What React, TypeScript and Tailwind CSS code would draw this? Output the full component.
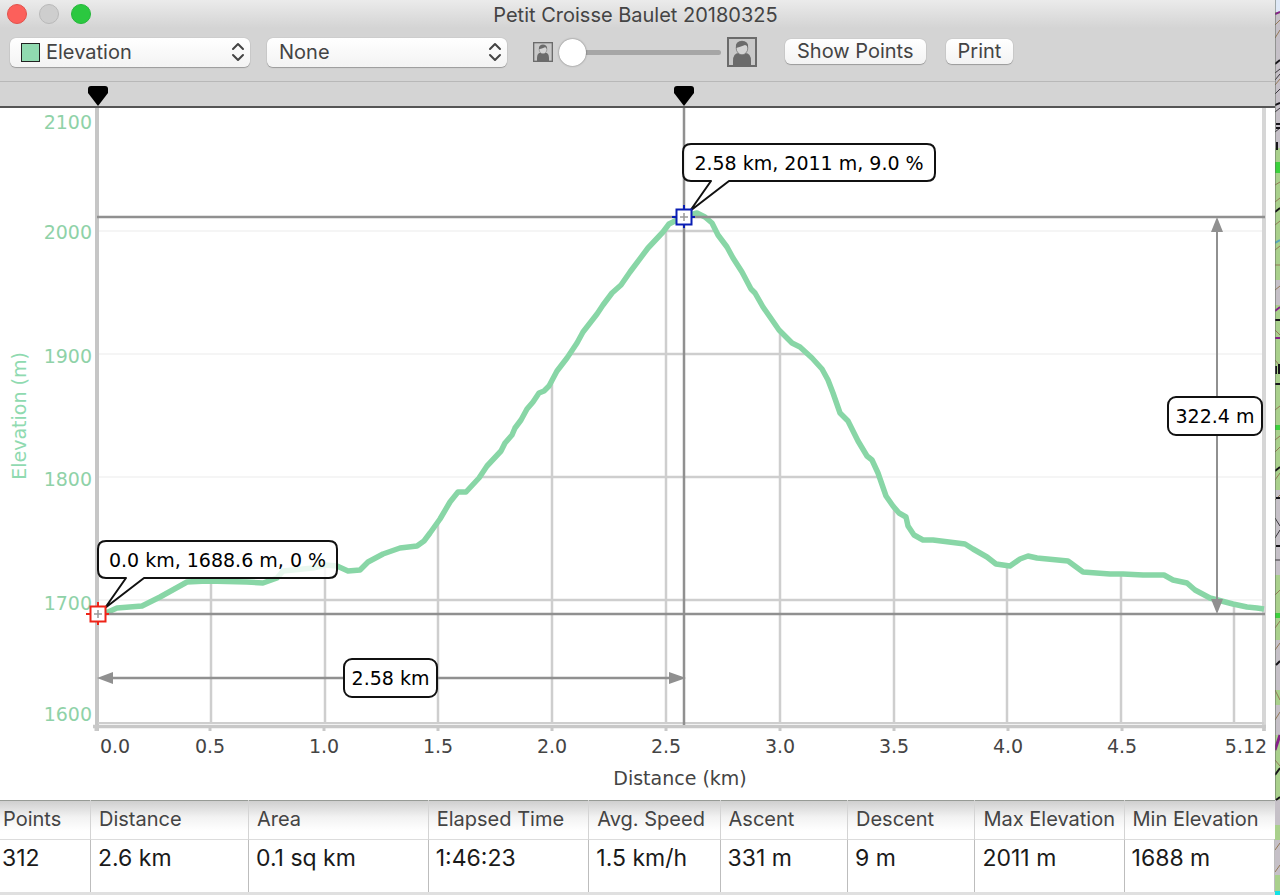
import type { ReactNode } from "react";

const profile =
  "M97 614L108 612L117 608L142 606L160 597L178 587L187 582L207 581L247 582L263 583L277 578L283 571L313 568L325 565L337 566L348 571L360 570L368 562L383 554L400 548L417 546L424 541L430 533L440 519L450 502L458 492L466 492L479 478L487 466L501 451L505 443L512 435L515 428L521 420L527 409L533 402L539 393L544 391L549 386L557 371L567 358L577 343L583 332L597 314L603 305L612 293L621 285L630 272L648 248L663 232L669 224L683 217L697 213L705 217L712 223L718 235L727 247L733 258L742 272L751 289L755 293L763 307L770 317L779 330L792 343L800 347L812 358L822 369L828 380L833 393L840 413L848 421L858 441L867 456L872 460L878 473L886 496L893 506L899 513L906 517L908 526L914 535L923 540L933 540L965 544L973 549L987 557L996 564L1010 566L1020 559L1028 556L1037 558L1068 561L1083 572L1110 574L1123 574L1143 575L1164 575L1173 580L1187 583L1195 590L1210 598L1233 604L1247 607L1257 608L1264 609";

const verticals = [211, 325, 438, 552, 666, 780, 894, 1007, 1121, 1234];
const horizontals = [231, 354, 477, 600];
const ticks = [96, 210, 324, 438, 552, 666, 780, 894, 1008, 1122, 1264];
const xLabels: [string, number][] = [
  ["0.0", 115], ["0.5", 210], ["1.0", 324], ["1.5", 438], ["2.0", 552], ["2.5", 666],
  ["3.0", 780], ["3.5", 894], ["4.0", 1008], ["4.5", 1122], ["5.12", 1246],
];
const yLabels: [string, number][] = [
  ["2100", 129], ["2000", 239], ["1900", 363], ["1800", 486], ["1700", 610], ["1600", 721],
];

const stats = [
  { name: "Points", value: "312", col: "w-[7.1%]" },
  { name: "Distance", value: "2.6 km", col: "w-[12.4%]" },
  { name: "Area", value: "0.1 sq km", col: "w-[14.1%]" },
  { name: "Elapsed Time", value: "1:46:23", col: "w-[12.6%]" },
  { name: "Avg. Speed", value: "1.5 km/h", col: "w-[10.3%]" },
  { name: "Ascent", value: "331 m", col: "w-[10%]" },
  { name: "Descent", value: "9 m", col: "w-[10%]" },
  { name: "Max Elevation", value: "2011 m", col: "w-[11.7%]" },
  { name: "Min Elevation", value: "1688 m", col: "w-[11.8%]" },
];

function PopUp({ label, options, swatch }: { label: string; options: string[]; swatch?: boolean }) {
  return (
    <div className="relative w-60">
      {swatch && (
        <span className="pointer-events-none absolute top-[5px] left-[11px] size-[19px] border border-[#222] bg-[#90dab0]" />
      )}
      <select
        aria-label={label}
        className={`block h-[29px] w-full appearance-none rounded-md bg-gradient-to-b from-white to-[#f3f3f3] text-[20px] leading-7 text-[#444] shadow-[0_1px_1px_#00000040,0_0_1px_#00000050] outline-none ${swatch ? "pl-9" : "pl-3"}`}
      >
        {options.map((o) => (
          <option key={o}>{o}</option>
        ))}
      </select>
      <svg
        viewBox="0 0 14 20"
        className="pointer-events-none absolute top-1 right-[5px] h-5 w-3.5 fill-none stroke-[#444] stroke-2"
        strokeLinecap="round"
        strokeLinejoin="round"
      >
        <path d="M2 7L7 2L12 7M2 13L7 18L12 13" />
      </svg>
    </div>
  );
}

function PushButton({ children }: { children: ReactNode }) {
  return (
    <button
      type="button"
      className="mb-0.5 h-[25px] shrink-0 rounded-md bg-gradient-to-b from-white to-[#f3f3f3] px-3 text-[20px] leading-6 text-[#444] shadow-[0_1px_1px_#00000040,0_0_1px_#00000050]"
    >
      {children}
    </button>
  );
}

function Person({ className }: { className: string }) {
  return (
    <svg viewBox="0 0 30 30" className={className}>
      <rect x="1" y="1" width="28" height="28" fill="#c9c9c9" stroke="#6b6b6b" strokeWidth="2" />
      <path d="M6 29V24Q6 16 12 16H18Q24 16 24 24V29Z" fill="#6b6b6b" />
      <ellipse cx="15" cy="11" rx="5.8" ry="6.8" fill="#d4d4d4" stroke="#777" strokeWidth="0.8" />
      <path d="M9 11Q8 4 15 4Q22 4 21 11Q20 8 18 8Q13 10 9 11Z" fill="#6b6b6b" />
    </svg>
  );
}

function Flag({ x }: { x: number }) {
  return <path d={`M${x - 10} 7Q${x - 10} 4 ${x - 7} 4H${x + 7}Q${x + 10} 4 ${x + 10} 7V11L${x} 24L${x - 10} 11Z`} />;
}

function Target({ x, y, color }: { x: number; y: number; color: string }) {
  return (
    <g>
      <path d={`M${x - 12} ${y}H${x + 11}M${x} ${y - 12}V${y + 11}`} stroke={color} strokeWidth="2" />
      <rect x={x - 7.5} y={y - 7.5} width="15" height="15" fill="#fff" stroke={color} strokeWidth="2" />
      <path d={`M${x - 4} ${y}H${x + 4}M${x} ${y - 4}V${y + 4}`} stroke="#999" strokeWidth="1.5" />
    </g>
  );
}

function Tag({ x, y, w, text }: { x: number; y: number; w: number; text: string }) {
  return (
    <g>
      <rect x={x} y={y} width={w} height="38" rx="8" fill="#fff" stroke="#111" strokeWidth="2" />
      <text x={x + w / 2} y={y + 26} textAnchor="middle" fill="#000">
        {text}
      </text>
    </g>
  );
}

function Callout({ x, y, w, text }: { x: number; y: number; w: number; text: string }) {
  const r = x + w;
  const b = y + 37;
  return (
    <g>
      <path
        d={`M${x + 8} ${y}H${r - 8}Q${r} ${y} ${r} ${y + 8}V${b - 8}Q${r} ${b} ${r - 8} ${b}H${x + 46}L${x + 7} ${b + 30}L${x + 28} ${b}H${x + 8}Q${x} ${b} ${x} ${b - 8}V${y + 8}Q${x} ${y} ${x + 8} ${y}Z`}
        fill="#fff"
        fillOpacity="0.82"
        stroke="#111"
        strokeWidth="2"
        strokeLinejoin="round"
      />
      <text x={x + w / 2} y={y + 26} textAnchor="middle" fill="#000">
        {text}
      </text>
    </g>
  );
}

function ElevationChart() {
  return (
    <svg
      viewBox="0 108 1275 692"
      className="block h-auto w-full bg-white font-['DejaVu_Sans',sans-serif] text-[19px]"
      role="img"
      aria-label="Elevation by distance"
    >
      <clipPath id="under">
        <path d={`${profile}V725H97Z`} />
      </clipPath>
      <g stroke="#f5f5f5" strokeWidth="2">
        {horizontals.map((y) => (
          <path key={y} d={`M98 ${y}H1264`} />
        ))}
      </g>
      <g stroke="#cecece" strokeWidth="2.5" clipPath="url(#under)">
        {horizontals.map((y) => (
          <path key={y} d={`M98 ${y}H1264`} />
        ))}
        {verticals.map((x) => (
          <path key={x} d={`M${x} 108V723`} />
        ))}
      </g>
      <path d="M1264 108V731" stroke="#d6d6d6" strokeWidth="4" />
      <path d="M97 108V731" stroke="#c6c6c6" strokeWidth="4" />
      <path d="M98 723H1264" stroke="#cecece" strokeWidth="2" />
      <path d="M93 726.5H1266" stroke="#c8c8c8" strokeWidth="3.5" />
      <g stroke="#c8c8c8" strokeWidth="3">
        {ticks.map((x) => (
          <path key={x} d={`M${x} 725V731`} />
        ))}
      </g>
      <path d={profile} fill="none" stroke="#88d6a6" strokeWidth="5.5" strokeLinejoin="round" />
      <g stroke="#909090" strokeWidth="2.5">
        <path d="M97 217H1265M97 614H1265" />
        <path d="M684 108V725" />
        <path d="M105 678H678" />
        <path d="M1217 225V606" strokeWidth="2" />
      </g>
      <g fill="#909090">
        <path d="M1217 217L1223 232H1211ZM1217 614L1223 599H1211ZM97 678L113 672V684ZM686 678L669 672V684Z" />
      </g>
      <g fill="#8fd2a8" textAnchor="end">
        {yLabels.map(([t, y]) => (
          <text key={t} x="92" y={y}>{t}</text>
        ))}
      </g>
      <text transform="translate(26 416) rotate(-90)" textAnchor="middle" fill="#8fdab0">
        Elevation (m)
      </text>
      <g fill="#444" textAnchor="middle">
        {xLabels.map(([t, x]) => (
          <text key={t} x={x} y="753">{t}</text>
        ))}
        <text x="680" y="785">Distance (km)</text>
      </g>
      <Callout x={98} y={541} w={239} text="0.0 km, 1688.6 m, 0 %" />
      <Callout x={683} y={144} w={252} text="2.58 km, 2011 m, 9.0 %" />
      <Tag x={344} y={659} w={93} text="2.58 km" />
      <Tag x={1168} y={397} w={94} text="322.4 m" />
      <Target x={98} y={614} color="#ee2418" />
      <Target x={684} y={217} color="#0a1eb4" />
    </svg>
  );
}

function MapEdge() {
  return (
    <svg viewBox="0 0 5 895" preserveAspectRatio="none" className="absolute inset-0 size-full" aria-hidden="true">
      <rect width="5" height="895" fill="#a9d08c" />
      <path d="M0 0H5V12H0Z" fill="#dfe9f7" />
      <path d="M0 14H5V148H0ZM0 280H5V305H0ZM0 490H5V575H0ZM0 640H5V690H0ZM0 705H5V735H0ZM0 800H5V825H0ZM0 840H5V875H0Z" fill="#c5c0c7" />
      <path d="M0 162H5V173H0ZM0 425H5V430H0ZM0 613H5V618H0Z" fill="#3bd23c" />
      <path
        d="M0 25L5 20M0 38L5 30M0 85L5 79M0 185L5 182M0 202L5 198M0 225L5 221M0 250L5 246M0 265H5M0 290L5 286M0 330L5 335M0 360L5 366M0 410L5 406M0 440L5 436M0 452L5 447M0 480L5 473M0 500L5 495M0 595L5 590M0 628L5 621M0 650L5 643M0 690L5 700M0 720L5 712M0 760L5 766M0 850L5 843M0 872L5 865"
        stroke="#957a58"
        strokeWidth="1"
      />
      <path
        d="M0 73L5 69M0 80L5 74M0 94L5 89M0 112L5 108M0 132L5 128M0 518L5 526M0 538L5 530M0 560H5"
        stroke="#3a373d"
        strokeWidth="1"
      />
      <path
        d="M0 64L5 60M0 105L5 103M1 124H5M1 128H5M2 142V150M0 212L5 208M0 320H5M1 366V374M4 364V374M0 384H5M0 471L5 467M1 498H5M1 546H5M1 665L5 661M0 775L5 768M1 800L5 797"
        stroke="#17151a"
        strokeWidth="2"
      />
      <path d="M0 14L5 12M0 311L5 307M0 338H5" stroke="#86208a" strokeWidth="2" />
      <path d="M0 750L5 735" stroke="#86208a" strokeWidth="3" />
      <path d="M0 243L5 240" stroke="#58a7bb" strokeWidth="2" />
      <path d="M0 891H5V895H0Z" fill="#15e2e5" />
      <path d="M0 0V800" stroke="#5f665c" strokeWidth="1" />
    </svg>
  );
}

export default function App() {
  return (
    <div className="flex min-h-screen bg-[#c5c0c7] font-[Inter,sans-serif]">
      <main className="flex min-w-0 flex-1 flex-col bg-[#e0e0e0]">
        <header className="bg-[linear-gradient(#ebebeb,#d4d4d4_28px)]">
          <div className="relative flex h-[30px] items-center justify-center">
            <div className="absolute top-1 left-[7px] flex gap-3">
              <button type="button" aria-label="Close" className="size-5 rounded-full border border-[#e2524b] bg-[#fc605b]" />
              <button type="button" aria-label="Minimize" className="size-5 rounded-full border border-[#b9b9b9] bg-[#cecece]" />
              <button type="button" aria-label="Zoom" className="size-5 rounded-full border border-[#25b83b] bg-[#2bc840]" />
            </div>
            <h1 className="pr-1 text-[20px] leading-7 text-[#444]">Petit Croisse Baulet 20180325</h1>
          </div>
          <div className="flex h-[52px] items-center border-b border-[#b8b8b8] pb-[7px] pl-[10px]">
            <div className="flex shrink-0 gap-[17px]">
              <PopUp label="Primary series" swatch options={["Elevation", "Slope", "Speed"]} />
              <PopUp label="Secondary series" options={["None", "Slope", "Speed"]} />
            </div>
            <Person className="ml-[26px] size-5 shrink-0" />
            <input
              type="range"
              aria-label="Zoom level"
              min={0}
              max={100}
              defaultValue={0}
              className="mx-1.5 h-7 w-[162px] shrink-0 appearance-none bg-transparent [&::-webkit-slider-runnable-track]:h-[5px] [&::-webkit-slider-runnable-track]:rounded-full [&::-webkit-slider-runnable-track]:bg-[#a6a6a6] [&::-webkit-slider-thumb]:-mt-[11px] [&::-webkit-slider-thumb]:size-[27px] [&::-webkit-slider-thumb]:appearance-none [&::-webkit-slider-thumb]:rounded-full [&::-webkit-slider-thumb]:bg-white [&::-webkit-slider-thumb]:shadow-[0_0_2px_#00000080]"
            />
            <Person className="size-[30px] shrink-0" />
            <div className="ml-7 flex gap-5">
              <PushButton>Show Points</PushButton>
              <PushButton>Print</PushButton>
            </div>
          </div>
        </header>
        <div className="border-b-2 border-[#555] bg-[#d4d4d4]">
          <svg viewBox="0 0 1275 24" className="block h-auto w-full" aria-hidden="true">
            <Flag x={98} />
            <Flag x={684} />
          </svg>
        </div>
        <ElevationChart />
        <table className="w-full table-fixed border-collapse bg-white text-left">
          <thead className="bg-[linear-gradient(#cfcfcf,#f2f2f2_16px,#ffffff_30px)]">
            <tr className="h-[39px] border-t border-b border-t-[#979b96] border-b-[#dcdcdc]">
              {stats.map((s) => (
                <th
                  key={s.name}
                  scope="col"
                  className={`${s.col} border-r border-[#d4d4d4] pb-0.5 pl-2 text-[20px] leading-6 font-normal whitespace-nowrap text-[#444] first:pl-[3px] last:border-r-0`}
                >
                  {s.name}
                </th>
              ))}
            </tr>
          </thead>
          <tbody>
            <tr className="h-[52px]">
              {stats.map((s) => (
                <td
                  key={s.name}
                  className="border-r border-[#bdbdbd] pb-4 pl-[7px] text-[23px] leading-7 whitespace-nowrap text-[#1a1a1a] first:pl-0.5"
                >
                  {s.value}
                </td>
              ))}
            </tr>
          </tbody>
        </table>
      </main>
      <aside className="relative w-[5px] shrink-0 overflow-hidden">
        <MapEdge />
      </aside>
    </div>
  );
}
